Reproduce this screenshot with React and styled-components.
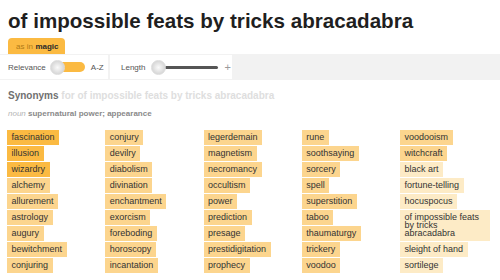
import React from "react";
import styled, { createGlobalStyle } from "styled-components";

const GlobalStyle = createGlobalStyle`
  body {
    margin: 0;
    background: #fff;
    font-family: "Liberation Sans", Arial, sans-serif;
  }
`;

const Page = styled.div`
  width: 500px;
  height: 280px;
  overflow: hidden;
`;

const Title = styled.h1`
  margin: 0;
  padding: 9px 0 0 8px;
  font-size: 20.6px;
  line-height: 24px;
  font-weight: 700;
  color: #1f1f1f;
  white-space: nowrap;
`;

const Tag = styled.div`
  display: inline-flex;
  align-items: center;
  gap: 2.5px;
  margin: 5px 0 0 8px;
  height: 16px;
  padding: 0 6px 0 8px;
  background: #fbba42;
  border-radius: 4px 4px 0 0;
  font-size: 8px;
  color: #b07a18;

  b {
    color: #2a2a2a;
  }
`;

const Toolbar = styled.div`
  display: flex;
  gap: 2px;
  height: 26px;
  padding: 1px 0;
  box-sizing: border-box;
  background: #f2f2f2;
`;

const Section = styled.div`
  display: flex;
  align-items: center;
  gap: ${(p) => p.gap || 6}px;
  width: ${(p) => p.width}px;
  padding-left: ${(p) => p.pl}px;
  box-sizing: border-box;
  background: #fff;
  font-size: 8px;
  color: #555;
`;

const Toggle = styled.div`
  position: relative;
  width: 35px;
  height: 15px;
`;

const Track = styled.div`
  position: absolute;
  left: 4px;
  right: 0;
  top: 2.5px;
  height: 10px;
  border-radius: 5px;
  background: #fbba42;
`;

const Knob = styled.div`
  position: absolute;
  left: 0;
  top: 0;
  width: 15px;
  height: 15px;
  border-radius: 50%;
  box-sizing: border-box;
  border: 1px solid #dcdcdc;
  background: radial-gradient(circle at 50% 50%, #fafafa 0%, #e4e4e4 45%, #c9c9c9 100%);
  z-index: 1;
`;

const Slider = styled.div`
  position: relative;
  width: 67px;
  height: 15px;
`;

const SliderTrack = styled.div`
  position: absolute;
  left: 10px;
  right: 0;
  top: 6px;
  height: 3px;
  border-radius: 2px;
  background: #555;
`;

const Plus = styled.span`
  font-size: 11px;
  color: #9a9a9a;
`;

const Heading = styled.h2`
  margin: 9.5px 0 0 8px;
  font-size: 10px;
  line-height: 12px;
  font-weight: 700;
  color: #707070;
  white-space: nowrap;

  span {
    color: #dedede;
  }
`;

const Sense = styled.div`
  margin: 7.5px 0 0 8px;
  font-size: 8px;
  line-height: 10px;
  font-weight: 700;
  color: #8a8a8a;

  i {
    font-weight: 400;
    color: #b5b5b5;
  }
`;

const Grid = styled.div`
  display: grid;
  grid-template-columns: repeat(5, 98.25px);
  margin-top: 11px;
  padding-left: 7px;
`;

const Column = styled.div`
  display: flex;
  flex-direction: column;
  align-items: flex-start;
  gap: 1.5px;
`;

const shades = { 3: "#fbba42", 2: "#fcd58e", 1: "#fdebc6" };

const Chip = styled.span`
  display: block;
  max-width: 90px;
  box-sizing: border-box;
  padding: 3.25px 4.5px;
  font-size: 9px;
  line-height: 8px;
  color: #333;
  background: ${(p) => shades[p.level]};
`;

const columns = [
  [
    ["fascination", 3], ["illusion", 3], ["wizardry", 3], ["alchemy", 2], ["allurement", 2],
    ["astrology", 2], ["augury", 2], ["bewitchment", 2], ["conjuring", 2],
  ],
  [
    ["conjury", 2], ["devilry", 2], ["diabolism", 2], ["divination", 2], ["enchantment", 2],
    ["exorcism", 2], ["foreboding", 2], ["horoscopy", 2], ["incantation", 2],
  ],
  [
    ["legerdemain", 2], ["magnetism", 2], ["necromancy", 2], ["occultism", 2], ["power", 2],
    ["prediction", 2], ["presage", 2], ["prestidigitation", 2], ["prophecy", 2],
  ],
  [
    ["rune", 2], ["soothsaying", 2], ["sorcery", 2], ["spell", 2], ["superstition", 2],
    ["taboo", 2], ["thaumaturgy", 2], ["trickery", 2], ["voodoo", 2],
  ],
  [
    ["voodooism", 2], ["witchcraft", 2], ["black art", 1], ["fortune-telling", 1], ["hocuspocus", 1],
    ["of impossible feats by tricks abracadabra", 1], ["sleight of hand", 1], ["sortilege", 1],
  ],
];

const App = () => (
  <Page>
    <GlobalStyle />
    <Title>of impossible feats by tricks abracadabra</Title>
    <Tag>
      as in <b>magic</b>
    </Tag>
    <Toolbar>
      <Section width={108} pl={8} gap={4}>
        Relevance
        <Toggle>
          <Track />
          <Knob />
        </Toggle>
        <span style={{ marginLeft: 2 }}>A-Z</span>
      </Section>
      <Section width={122} pl={11}>
        Length
        <Slider>
          <SliderTrack />
          <Knob />
        </Slider>
        <Plus>+</Plus>
      </Section>
    </Toolbar>
    <Heading>
      Synonyms <span>for of impossible feats by tricks abracadabra</span>
    </Heading>
    <Sense>
      <i>noun</i> supernatural power; appearance
    </Sense>
    <Grid>
      {columns.map((col, i) => (
        <Column key={i}>
          {col.map(([word, level]) => (
            <Chip key={word} level={level}>
              {word}
            </Chip>
          ))}
        </Column>
      ))}
    </Grid>
  </Page>
);

export default App;
